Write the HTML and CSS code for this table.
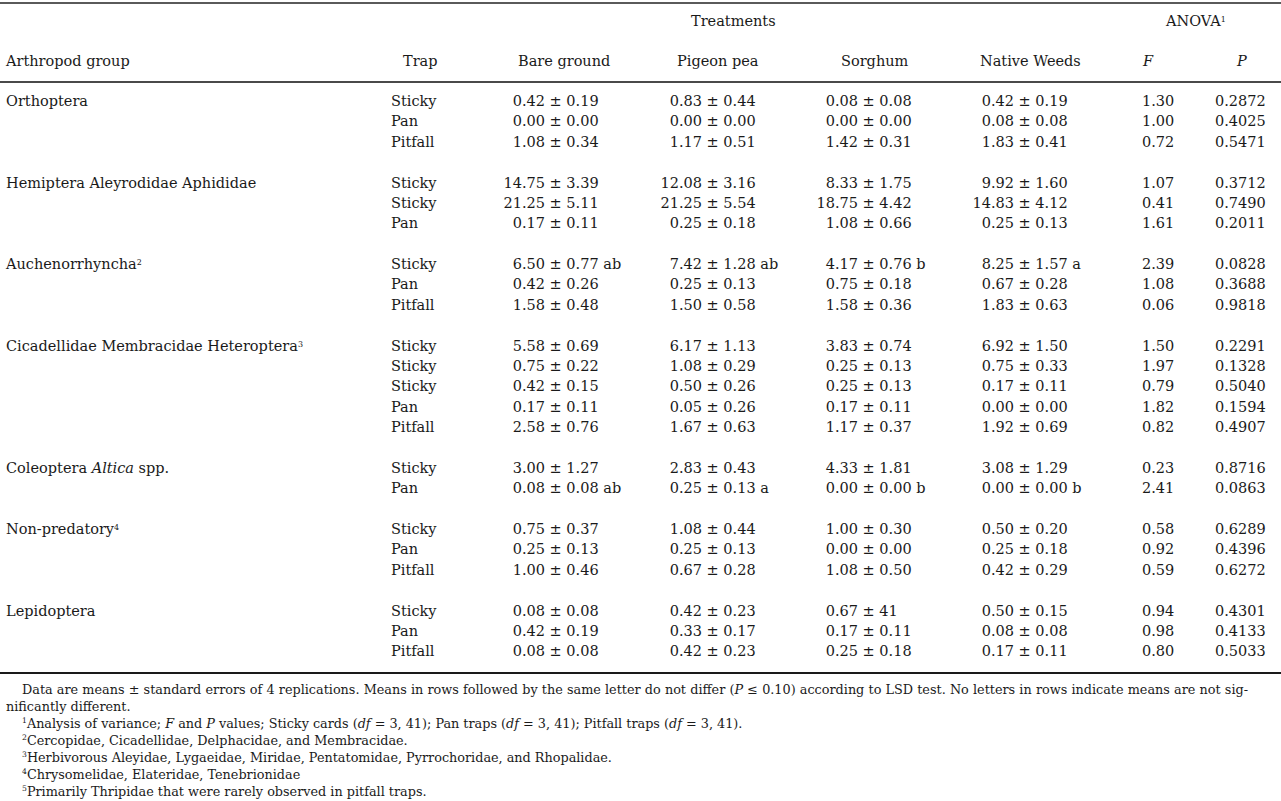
FILE: index.html
```html
<!DOCTYPE html>
<html lang="en">
<head>
<meta charset="utf-8">
<title>Arthropod captures by trap and treatment</title>
<link rel="stylesheet" href="styles.css">
</head>
<body>
<table class="data">
  <colgroup>
    <col class="c1"><col class="c2"><col class="c3"><col class="c4"><col class="c5"><col class="c6"><col class="c7"><col class="c8">
  </colgroup>
  <thead>
    <tr class="span-row">
      <th colspan="2"></th>
      <th colspan="4" class="h-treat">Treatments</th>
      <th colspan="2" class="h-anova">ANOVA<sup>1</sup></th>
    </tr>
    <tr class="col-row">
      <th class="h-grp">Arthropod group</th>
      <th class="h-trap">Trap</th>
      <th class="h-bare">Bare ground</th>
      <th class="h-pig">Pigeon pea</th>
      <th class="h-sor">Sorghum</th>
      <th class="h-nat">Native Weeds</th>
      <th class="h-f"><i>F</i></th>
      <th class="h-p"><i>P</i></th>
    </tr>
  </thead>
  <tbody>
    <tr class="first">
      <td class="grp">Orthoptera</td><td class="trap">Sticky</td>
      <td><span class="m">0.42</span> ± 0.19</td><td><span class="m">0.83</span> ± 0.44</td><td><span class="m">0.08</span> ± 0.08</td><td><span class="m">0.42</span> ± 0.19</td>
      <td class="f">1.30</td><td class="p">0.2872</td>
    </tr>
    <tr>
      <td class="grp"></td><td class="trap">Pan</td>
      <td><span class="m">0.00</span> ± 0.00</td><td><span class="m">0.00</span> ± 0.00</td><td><span class="m">0.00</span> ± 0.00</td><td><span class="m">0.08</span> ± 0.08</td>
      <td class="f">1.00</td><td class="p">0.4025</td>
    </tr>
    <tr>
      <td class="grp"></td><td class="trap">Pitfall</td>
      <td><span class="m">1.08</span> ± 0.34</td><td><span class="m">1.17</span> ± 0.51</td><td><span class="m">1.42</span> ± 0.31</td><td><span class="m">1.83</span> ± 0.41</td>
      <td class="f">0.72</td><td class="p">0.5471</td>
    </tr>
    <tr class="gap"><td colspan="8"></td></tr>

    <tr>
      <td class="grp">Hemiptera Aleyrodidae Aphididae</td><td class="trap">Sticky</td>
      <td><span class="m">14.75</span> ± 3.39</td><td><span class="m">12.08</span> ± 3.16</td><td><span class="m">8.33</span> ± 1.75</td><td><span class="m">9.92</span> ± 1.60</td>
      <td class="f">1.07</td><td class="p">0.3712</td>
    </tr>
    <tr>
      <td class="grp"></td><td class="trap">Sticky</td>
      <td><span class="m">21.25</span> ± 5.11</td><td><span class="m">21.25</span> ± 5.54</td><td><span class="m">18.75</span> ± 4.42</td><td><span class="m">14.83</span> ± 4.12</td>
      <td class="f">0.41</td><td class="p">0.7490</td>
    </tr>
    <tr>
      <td class="grp"></td><td class="trap">Pan</td>
      <td><span class="m">0.17</span> ± 0.11</td><td><span class="m">0.25</span> ± 0.18</td><td><span class="m">1.08</span> ± 0.66</td><td><span class="m">0.25</span> ± 0.13</td>
      <td class="f">1.61</td><td class="p">0.2011</td>
    </tr>
    <tr class="gap"><td colspan="8"></td></tr>

    <tr>
      <td class="grp">Auchenorrhyncha<sup>2</sup></td><td class="trap">Sticky</td>
      <td><span class="m">6.50</span> ± 0.77 ab</td><td><span class="m">7.42</span> ± 1.28 ab</td><td><span class="m">4.17</span> ± 0.76 b</td><td><span class="m">8.25</span> ± 1.57 a</td>
      <td class="f">2.39</td><td class="p">0.0828</td>
    </tr>
    <tr>
      <td class="grp"></td><td class="trap">Pan</td>
      <td><span class="m">0.42</span> ± 0.26</td><td><span class="m">0.25</span> ± 0.13</td><td><span class="m">0.75</span> ± 0.18</td><td><span class="m">0.67</span> ± 0.28</td>
      <td class="f">1.08</td><td class="p">0.3688</td>
    </tr>
    <tr>
      <td class="grp"></td><td class="trap">Pitfall</td>
      <td><span class="m">1.58</span> ± 0.48</td><td><span class="m">1.50</span> ± 0.58</td><td><span class="m">1.58</span> ± 0.36</td><td><span class="m">1.83</span> ± 0.63</td>
      <td class="f">0.06</td><td class="p">0.9818</td>
    </tr>
    <tr class="gap"><td colspan="8"></td></tr>

    <tr>
      <td class="grp">Cicadellidae Membracidae Heteroptera<sup>3</sup></td><td class="trap">Sticky</td>
      <td><span class="m">5.58</span> ± 0.69</td><td><span class="m">6.17</span> ± 1.13</td><td><span class="m">3.83</span> ± 0.74</td><td><span class="m">6.92</span> ± 1.50</td>
      <td class="f">1.50</td><td class="p">0.2291</td>
    </tr>
    <tr>
      <td class="grp"></td><td class="trap">Sticky</td>
      <td><span class="m">0.75</span> ± 0.22</td><td><span class="m">1.08</span> ± 0.29</td><td><span class="m">0.25</span> ± 0.13</td><td><span class="m">0.75</span> ± 0.33</td>
      <td class="f">1.97</td><td class="p">0.1328</td>
    </tr>
    <tr>
      <td class="grp"></td><td class="trap">Sticky</td>
      <td><span class="m">0.42</span> ± 0.15</td><td><span class="m">0.50</span> ± 0.26</td><td><span class="m">0.25</span> ± 0.13</td><td><span class="m">0.17</span> ± 0.11</td>
      <td class="f">0.79</td><td class="p">0.5040</td>
    </tr>
    <tr>
      <td class="grp"></td><td class="trap">Pan</td>
      <td><span class="m">0.17</span> ± 0.11</td><td><span class="m">0.05</span> ± 0.26</td><td><span class="m">0.17</span> ± 0.11</td><td><span class="m">0.00</span> ± 0.00</td>
      <td class="f">1.82</td><td class="p">0.1594</td>
    </tr>
    <tr>
      <td class="grp"></td><td class="trap">Pitfall</td>
      <td><span class="m">2.58</span> ± 0.76</td><td><span class="m">1.67</span> ± 0.63</td><td><span class="m">1.17</span> ± 0.37</td><td><span class="m">1.92</span> ± 0.69</td>
      <td class="f">0.82</td><td class="p">0.4907</td>
    </tr>
    <tr class="gap"><td colspan="8"></td></tr>

    <tr>
      <td class="grp">Coleoptera <i>Altica</i> spp.</td><td class="trap">Sticky</td>
      <td><span class="m">3.00</span> ± 1.27</td><td><span class="m">2.83</span> ± 0.43</td><td><span class="m">4.33</span> ± 1.81</td><td><span class="m">3.08</span> ± 1.29</td>
      <td class="f">0.23</td><td class="p">0.8716</td>
    </tr>
    <tr>
      <td class="grp"></td><td class="trap">Pan</td>
      <td><span class="m">0.08</span> ± 0.08 ab</td><td><span class="m">0.25</span> ± 0.13 a</td><td><span class="m">0.00</span> ± 0.00 b</td><td><span class="m">0.00</span> ± 0.00 b</td>
      <td class="f">2.41</td><td class="p">0.0863</td>
    </tr>
    <tr class="gap"><td colspan="8"></td></tr>

    <tr>
      <td class="grp">Non-predatory<sup>4</sup></td><td class="trap">Sticky</td>
      <td><span class="m">0.75</span> ± 0.37</td><td><span class="m">1.08</span> ± 0.44</td><td><span class="m">1.00</span> ± 0.30</td><td><span class="m">0.50</span> ± 0.20</td>
      <td class="f">0.58</td><td class="p">0.6289</td>
    </tr>
    <tr>
      <td class="grp"></td><td class="trap">Pan</td>
      <td><span class="m">0.25</span> ± 0.13</td><td><span class="m">0.25</span> ± 0.13</td><td><span class="m">0.00</span> ± 0.00</td><td><span class="m">0.25</span> ± 0.18</td>
      <td class="f">0.92</td><td class="p">0.4396</td>
    </tr>
    <tr>
      <td class="grp"></td><td class="trap">Pitfall</td>
      <td><span class="m">1.00</span> ± 0.46</td><td><span class="m">0.67</span> ± 0.28</td><td><span class="m">1.08</span> ± 0.50</td><td><span class="m">0.42</span> ± 0.29</td>
      <td class="f">0.59</td><td class="p">0.6272</td>
    </tr>
    <tr class="gap"><td colspan="8"></td></tr>

    <tr>
      <td class="grp">Lepidoptera</td><td class="trap">Sticky</td>
      <td><span class="m">0.08</span> ± 0.08</td><td><span class="m">0.42</span> ± 0.23</td><td><span class="m">0.67</span> ± 41</td><td><span class="m">0.50</span> ± 0.15</td>
      <td class="f">0.94</td><td class="p">0.4301</td>
    </tr>
    <tr>
      <td class="grp"></td><td class="trap">Pan</td>
      <td><span class="m">0.42</span> ± 0.19</td><td><span class="m">0.33</span> ± 0.17</td><td><span class="m">0.17</span> ± 0.11</td><td><span class="m">0.08</span> ± 0.08</td>
      <td class="f">0.98</td><td class="p">0.4133</td>
    </tr>
    <tr class="last">
      <td class="grp"></td><td class="trap">Pitfall</td>
      <td><span class="m">0.08</span> ± 0.08</td><td><span class="m">0.42</span> ± 0.23</td><td><span class="m">0.25</span> ± 0.18</td><td><span class="m">0.17</span> ± 0.11</td>
      <td class="f">0.80</td><td class="p">0.5033</td>
    </tr>
  </tbody>
</table>

<div class="notes">
  <div class="note lead">Data are means ± standard errors of 4 replications. Means in rows followed by the same letter do not differ (<i>P</i> ≤ 0.10) according to LSD test. No letters in rows indicate means are not sig-</div>
  <div class="note">nificantly different.</div>
  <div class="note fn"><sup>1</sup>Analysis of variance; <i>F</i> and <i>P</i> values; Sticky cards (<i>df</i> = 3, 41); Pan traps (<i>df</i> = 3, 41); Pitfall traps (<i>df</i> = 3, 41).</div>
  <div class="note fn"><sup>2</sup>Cercopidae, Cicadellidae, Delphacidae, and Membracidae.</div>
  <div class="note fn"><sup>3</sup>Herbivorous Aleyidae, Lygaeidae, Miridae, Pentatomidae, Pyrrochoridae, and Rhopalidae.</div>
  <div class="note fn"><sup>4</sup>Chrysomelidae, Elateridae, Tenebrionidae</div>
  <div class="note fn"><sup>5</sup>Primarily Thripidae that were rarely observed in pitfall traps.</div>
</div>
</body>
</html>
```

FILE: styles.css
```css
html, body {
  margin: 0;
  padding: 0;
  background: #ffffff;
}

body {
  color: #1a1a1a;
  font-family: "DejaVu Serif", "Liberation Serif", serif;
  width: 1281px;
}

sup {
  font-size: 0.55em;
  line-height: 0;
  vertical-align: 0.55em;
}

/* ---------- table ---------- */
.data {
  width: 1281px;
  margin-top: 2px;
  border-collapse: collapse;
  table-layout: fixed;
  font-size: 14.5px;
}

.c1 { width: 391px; }
.c2 { width: 112px; }
.c3 { width: 157px; }
.c4 { width: 156px; }
.c5 { width: 156px; }
.c6 { width: 170px; }
.c7 { width: 69px; }
.c8 { width: 70px; }

th {
  font-weight: normal;
  text-align: left;
  white-space: nowrap;
  padding: 0;
}

.span-row th {
  border-top: 2px solid #5a5a5a;
  line-height: 20px;
  padding-top: 7px;
  padding-bottom: 10px;
}

.col-row th {
  border-bottom: 2px solid #4a4a4a;
  line-height: 20px;
  padding-top: 10px;
  padding-bottom: 10px;
}

.h-treat { padding-left: 188px !important; }
.h-anova { padding-left: 24px !important; }
.h-grp   { padding-left: 6px !important; }
.h-trap  { padding-left: 12px !important; }
.h-bare  { padding-left: 15px !important; }
.h-pig   { padding-left: 17px !important; }
.h-sor   { padding-left: 25px !important; }
.h-nat   { padding-left: 8px !important; }
.h-f     { padding-left: 1px !important; }
.h-p     { padding-left: 26px !important; }

td {
  padding: 0;
  line-height: 20.4px;
  white-space: nowrap;
  vertical-align: top;
}

td.grp { padding-left: 6px; }

.m {
  display: inline-block;
  width: 42px;
  text-align: right;
}

td.f { padding-left: 0; }
td.p { padding-left: 4px; }

tr.first td { padding-top: 8px; }
tr.last td {
  padding-bottom: 10px;
  border-bottom: 2px solid #1a1a1a;
}

tr.gap td { height: 20.3px; }

/* ---------- notes ---------- */
.notes {
  padding: 0 33px 0 6px;
  margin-top: 7px;
  font-size: 12.8px;
  line-height: 17px;
}

.note {
  white-space: nowrap;
}

.note.lead {
  text-indent: 16px;
  word-spacing: -1px;
  text-align: justify;
  text-align-last: justify;
}

.note.fn {
  padding-left: 16px;
}

.note sup {
  font-size: 0.6em;
  vertical-align: 0.6em;
}
```
